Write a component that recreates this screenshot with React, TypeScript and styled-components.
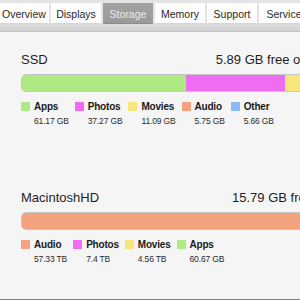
import React from "react";
import styled, { createGlobalStyle } from "styled-components";

const GlobalStyle = createGlobalStyle`
  html, body { margin: 0; padding: 0; background: #f5f5f5; overflow: hidden; }
  body { font-family: "Liberation Sans", Arial, sans-serif; }
`;

const Window = styled.div`
  width: 300px;
  height: 300px;
  box-sizing: border-box;
  overflow: hidden;
  background: #f5f5f5;
  border-bottom: 1px solid #7d7d7d;
`;

const TabBar = styled.div`
  display: flex;
  gap: 2px;
  padding-top: 3px;
  margin-left: -1px;
  background: #e4e4e4;
  height: 21px;
`;

const Tab = styled.div<{ $active?: boolean }>`
  flex: 0 0 50px;
  height: 21px;
  display: flex;
  align-items: center;
  justify-content: center;
  font-size: 10.5px;
  color: ${(p) => (p.$active ? "#ececec" : "#2a2a2a")};
  background: ${(p) => (p.$active ? "linear-gradient(#a3a3a3, #999999)" : "#fdfdfd")};
  box-shadow: inset 0 -1px 0 ${(p) => (p.$active ? "#8c8c8c" : "#d6d6d6")};
`;

const Band = styled.div`
  height: 7px;
  background: linear-gradient(#dcdcdc, #d3d3d3);
  border-bottom: 1px solid #c4c4c4;
`;

const Content = styled.div`
  padding: 20px 0 0 21px;
  width: 340px;
  display: flex;
  flex-direction: column;
`;

const Section = styled.div<{ $gap?: number }>`
  display: flex;
  flex-direction: column;
  margin-bottom: ${(p) => p.$gap ?? 0}px;
`;

const Header = styled.div`
  display: flex;
  align-items: baseline;
  font-size: 13px;
  color: #1e1e1e;
  height: 16px;
`;

const Title = styled.span`
  flex: 0 0 auto;
`;

const Free = styled.span<{ $left: number }>`
  margin-left: ${(p) => p.$left}px;
  white-space: nowrap;
`;

const Bar = styled.div`
  margin-top: 6px;
  height: 18px;
  display: flex;
  border: 1px solid #c6c6c6;
  border-radius: 5px 0 0 5px;
  overflow: hidden;
  box-sizing: border-box;
  width: 340px;
`;

const Segment = styled.div<{ $color: string }>`
  background: ${(p) => p.$color};
  height: 100%;
  flex-shrink: 0;
`;

const Legend = styled.div`
  display: flex;
  gap: 6px;
  margin-top: 10px;
`;

const Item = styled.div`
  display: flex;
  gap: 4px;
`;

const Swatch = styled.div<{ $color: string }>`
  width: 9px;
  height: 9px;
  background: ${(p) => p.$color};
`;

const ItemText = styled.div`
  display: flex;
  flex-direction: column;
`;

const Label = styled.span`
  font-size: 10px;
  font-weight: bold;
  letter-spacing: -0.2px;
  color: #1a1a1a;
  line-height: 10px;
`;

const Value = styled.span`
  font-size: 8.5px;
  letter-spacing: -0.15px;
  color: #2a2a2a;
  line-height: 10px;
  margin-top: 4px;
`;

const C = {
  green: "#aeea82",
  magenta: "#f06cf0",
  yellow: "#f6e67c",
  orange: "#f4a17e",
  blue: "#8ab8f8",
  free: "#f5f5f5",
};

const tabs = ["Overview", "Displays", "Storage", "Memory", "Support", "Service"];

type Entry = { label: string; value: string; color: string; w: number };

const ssd: Entry[] = [
  { label: "Apps", value: "61.17 GB", color: C.green, w: 164 },
  { label: "Photos", value: "37.27 GB", color: C.magenta, w: 99 },
  { label: "Movies", value: "11.09 GB", color: C.yellow, w: 30 },
  { label: "Audio", value: "5.75 GB", color: C.orange, w: 15 },
  { label: "Other", value: "5.66 GB", color: C.blue, w: 15 },
];

const mac: Entry[] = [
  { label: "Audio", value: "57.33 TB", color: C.orange, w: 340 },
  { label: "Photos", value: "7.4 TB", color: C.magenta, w: 0 },
  { label: "Movies", value: "4.56 TB", color: C.yellow, w: 0 },
  { label: "Apps", value: "60.67 GB", color: C.green, w: 0 },
];

function Drive({ name, free, freeLeft, entries, gap }: { name: string; free: string; freeLeft: number; entries: Entry[]; gap?: number }) {
  return (
    <Section $gap={gap}>
      <Header>
        <Title>{name}</Title>
        <Free $left={freeLeft}>{free}</Free>
      </Header>
      <Bar>
        {entries.filter((e) => e.w > 0).map((e) => (
          <Segment key={e.label} $color={e.color} style={{ width: e.w }} />
        ))}
        <Segment $color={C.free} style={{ flex: 1 }} />
      </Bar>
      <Legend>
        {entries.map((e) => (
          <Item key={e.label}>
            <Swatch $color={e.color} />
            <ItemText>
              <Label>{e.label}</Label>
              <Value>{e.value}</Value>
            </ItemText>
          </Item>
        ))}
      </Legend>
    </Section>
  );
}

export default function App() {
  return (
    <>
      <GlobalStyle />
      <Window>
        <TabBar>
          {tabs.map((t) => (
            <Tab key={t} $active={t === "Storage"}>{t}</Tab>
          ))}
        </TabBar>
        <Band />
        <Content>
          <Drive name="SSD" free="5.89 GB free of 126.83 GB" freeLeft={168} entries={ssd} gap={64} />
          <Drive name="MacintoshHD" free="15.79 GB free of 145.96 TB" freeLeft={133} entries={mac} />
        </Content>
      </Window>
    </>
  );
}
